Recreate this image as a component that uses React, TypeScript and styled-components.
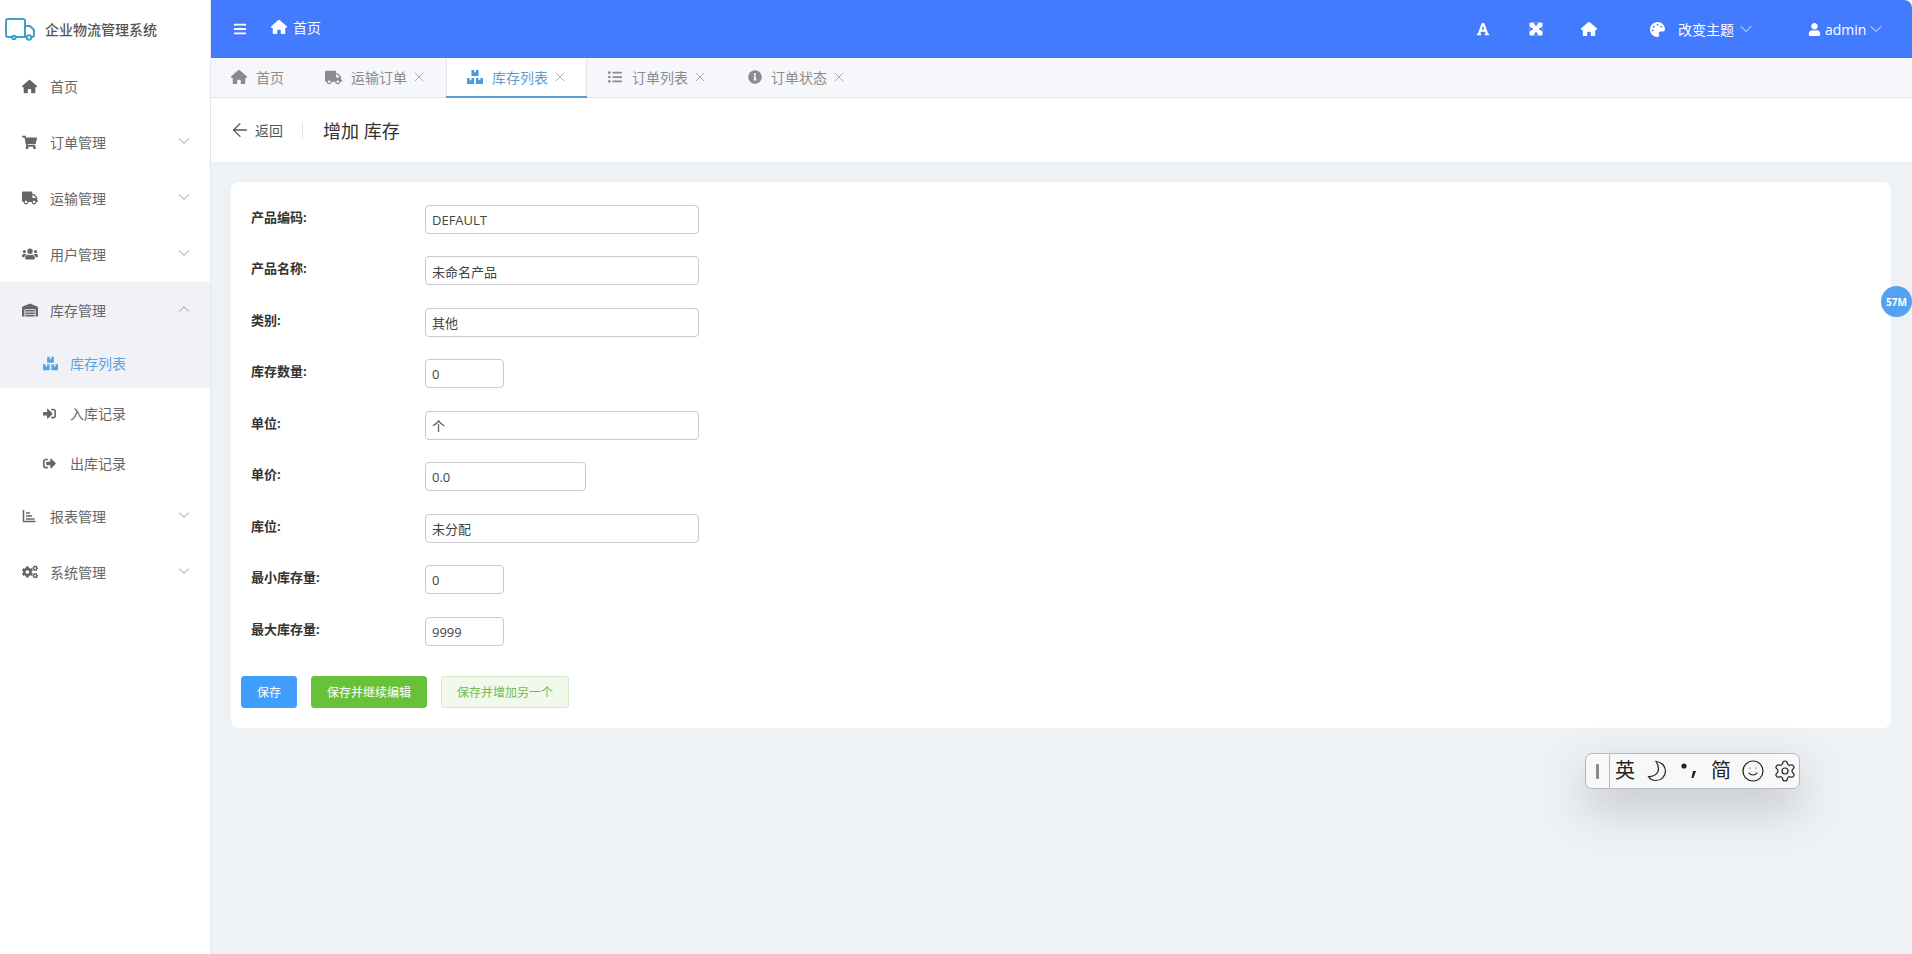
import React from "react";
import styled, { createGlobalStyle } from "styled-components";
import {
  FaBars,
  FaBoxes,
  FaCogs,
  FaFont,
  FaInfoCircle,
  FaListUl,
  FaPalette,
  FaShoppingCart,
  FaSignInAlt,
  FaSignOutAlt,
  FaTruck,
  FaUser,
  FaUsers,
  FaWarehouse,
} from "react-icons/fa";
import { FaHouse } from "react-icons/fa6";
import { ArrowLeft, ChevronDown, ChevronUp, Settings, Smile, X } from "lucide-react";

const FONT = `"Open Sans", "Noto Sans CJK SC", sans-serif`;

const GlobalStyle = createGlobalStyle`
  html, body {
    margin: 0;
    padding: 0;
    height: 100%;
    background: #fff;
    font-family: ${FONT};
    overflow: hidden;
  }
  #root { height: 100%; }
  * { box-sizing: border-box; }
`;

const Shell = styled.div`
  display: flex;
  width: 1912px;
  height: 954px;
  position: relative;
  overflow: hidden;
  border-top-right-radius: 8px;
`;

const Sidebar = styled.aside`
  width: 211px;
  flex: none;
  background: #fff;
  border-right: 1px solid #e3e6ea;
`;

const Brand = styled.div`
  height: 58px;
  display: flex;
  align-items: center;
  padding-left: 5px;
  gap: 10px;
  font-size: 14px;
  font-weight: 500;
  color: #555;
`;

const MenuRow = styled.div<{ $open?: boolean }>`
  height: 56px;
  display: flex;
  align-items: center;
  padding-left: 22px;
  font-size: 14px;
  color: #666;
  background: ${(p) => (p.$open ? "#f0f2f7" : "transparent")};
`;

const MenuIcon = styled.span`
  width: 28px;
  flex: none;
  display: flex;
  align-items: center;
  color: #666;
`;

const MenuLabel = styled.span`
  flex: 1;
`;

const MenuArrow = styled.span`
  width: 35px;
  margin-top: -3px;
  display: flex;
  color: #8f8f8f;
`;

const SubRow = styled.div<{ $active?: boolean }>`
  height: 50px;
  display: flex;
  align-items: center;
  padding-left: 43px;
  font-size: 14px;
  color: ${(p) => (p.$active ? "#5aa2e0" : "#666")};
  background: ${(p) => (p.$active ? "#f0f2f7" : "transparent")};
`;

const SubIcon = styled.span`
  width: 27px;
  flex: none;
  display: flex;
  align-items: center;
`;

const Main = styled.main`
  flex: 1;
  min-width: 0;
  display: flex;
  flex-direction: column;
  background: #eff2f5;
`;

const TopBar = styled.header`
  height: 58px;
  flex: none;
  display: flex;
  align-items: center;
  background: #437bff;
  color: #fff;
  font-size: 14px;
`;

const BarsButton = styled.span`
  margin-left: 22px;
  width: 38px;
  display: flex;
`;

const Crumb = styled.span`
  display: flex;
  align-items: center;
  gap: 6px;
  margin-top: -4px;
`;

const TopRight = styled.div`
  margin-left: auto;
  display: flex;
  align-items: center;
  height: 100%;
`;

const TopIcon = styled.span`
  width: 16px;
  display: flex;
  justify-content: center;
  margin-right: 37px;
`;

const ThemeMenu = styled.span`
  display: flex;
  align-items: center;
  margin-left: 16px;
  width: 158px;
`;

const ThemeText = styled.span`
  margin: 0 2px 0 13px;
`;

const UserMenu = styled.span`
  display: flex;
  align-items: center;
  width: 104px;
  font-size: 14px;
`;

const UserName = styled.span`
  margin-left: 4px;
`;

const TabBar = styled.nav`
  height: 40px;
  flex: none;
  display: flex;
  background: #f5f7fa;
  border-bottom: 1px solid #e2e5e9;
  font-size: 14px;
  color: #8c8c8c;
`;

const Tab = styled.div<{ $active?: boolean; $gap: number }>`
  display: flex;
  align-items: center;
  padding: 0 20px;
  gap: ${(p) => p.$gap}px;
  height: 40px;
  color: ${(p) => (p.$active ? "#5a9fd4" : "#8c8c8c")};
  background: ${(p) => (p.$active ? "#fff" : "transparent")};
  border-bottom: 2px solid ${(p) => (p.$active ? "#5a9bcb" : "transparent")};
  box-shadow: ${(p) => (p.$active ? "inset 1px 0 #e2e5e9, inset -1px 0 #e2e5e9" : "none")};
`;

const TabIcon = styled.span<{ $active?: boolean; $box: number }>`
  width: ${(p) => p.$box}px;
  display: flex;
  justify-content: center;
  color: ${(p) => (p.$active ? "#4a9ae0" : "#8a8a8f")};
`;

const TabClose = styled.span<{ $gap: number }>`
  display: flex;
  margin-left: ${(p) => 4 - p.$gap}px;
  margin-right: -1px;
  color: #999;
`;

const PageHeader = styled.div`
  height: 64px;
  flex: none;
  display: flex;
  align-items: center;
  background: #fff;
  padding-left: 18px;
`;

const BackLink = styled.span`
  display: flex;
  align-items: center;
  gap: 4px;
  font-size: 14px;
  color: #555;
`;

const HeaderDivider = styled.span`
  width: 1px;
  height: 16px;
  background: #e3e5e8;
  margin: 0 20px 0 19px;
`;

const PageTitle = styled.span`
  font-size: 18px;
  color: #303133;
`;

const Body = styled.div`
  flex: 1;
  padding: 20px 21px 0 20px;
`;

const Card = styled.form`
  background: #fff;
  border-radius: 8px;
  padding: 23px 20px 20px 10px;
  height: 546px;
`;

const FormRow = styled.div`
  display: flex;
  align-items: flex-start;
  height: 51.45px;
`;

const FieldLabel = styled.label`
  width: 184px;
  flex: none;
  padding-left: 10px;
  margin-top: 2px;
  font-size: 13px;
  line-height: 20px;
  font-weight: 700;
  color: #333;
`;

const Field = styled.input<{ $size: "long" | "mid" | "short" }>`
  height: 29px;
  width: ${(p) => ({ long: 274, mid: 161, short: 79 }[p.$size])}px;
  border: 1px solid #c9c9c9;
  border-radius: 4px;
  padding: 1px 6px 0;
  font-family: ${FONT};
  font-size: 13px;
  color: #444;
  outline: none;
  background: #fff;
`;

const Actions = styled.div`
  display: flex;
  gap: 14px;
  margin-top: 8px;
`;

const ActionButton = styled.button<{ $kind: "primary" | "success" | "plain" }>`
  height: 32px;
  padding: 0 15px;
  border-radius: 3px;
  font-family: ${FONT};
  font-size: 12px;
  cursor: pointer;
  color: ${(p) => (p.$kind === "plain" ? "#74bb50" : "#fff")};
  background: ${(p) =>
    p.$kind === "primary" ? "#409eff" : p.$kind === "success" ? "#67c23a" : "#f0f9eb"};
  border: 1px solid
    ${(p) =>
      p.$kind === "primary" ? "#409eff" : p.$kind === "success" ? "#67c23a" : "#d5ebc8"};
`;

const MemoryBadge = styled.div`
  position: absolute;
  left: 1881px;
  top: 286px;
  width: 31px;
  height: 31px;
  border-radius: 50%;
  background: #55a3f0;
  color: #fff;
  font-size: 10px;
  font-weight: 700;
  display: flex;
  align-items: center;
  justify-content: center;
`;

const ImeBar = styled.div`
  position: absolute;
  left: 1585px;
  top: 753px;
  width: 215px;
  height: 36px;
  display: flex;
  align-items: center;
  background: #f8f8f8;
  border: 1px solid #b9b9b9;
  border-radius: 7px;
  color: #222;
  box-shadow: 0 18px 45px rgba(60, 70, 80, 0.28);
`;

const ImeGrip = styled.span`
  width: 24px;
  height: 100%;
  flex: none;
  display: flex;
  align-items: center;
  justify-content: center;
  border-right: 1px solid #b9b9b9;

  &::before {
    content: "";
    width: 3px;
    height: 15px;
    background: #888;
    border-radius: 1px;
  }
`;

const ImeItem = styled.span<{ $left: number }>`
  display: flex;
  margin-left: ${(p) => p.$left}px;
  font-size: 20px;
  line-height: 1;
`;

const TruckLogo = () => (
  <svg width="30" height="24" viewBox="0 0 30 24" fill="none" stroke="#3e9fc9" strokeWidth="2">
    <path d="M7 20H3A2 2 0 0 1 1 18V4A2 2 0 0 1 3 2H18A2 2 0 0 1 20 4V20H11" />
    <path d="M20 9H25L29 13V18A2 2 0 0 1 27 20H26.500" />
    <path d="M20 20H21" />
    <circle cx="9" cy="20.500" r="1.800" />
    <circle cx="24" cy="20.500" r="2.200" />
  </svg>
);

const ChartIcon = () => (
  <svg width="14" height="14" viewBox="0 0 14 14" fill="none" stroke="#666" strokeWidth="1.500">
    <path d="M1.500 1V12.500H13.500" />
    <path d="M4 4H8M4 7H10M4 10H12.500" />
  </svg>
);

const FullscreenIcon = () => (
  <svg width="14" height="14" viewBox="0 0 14 14">
    <rect x="0.500" y="0.500" width="13" height="13" rx="1" fill="#fff" />
    <path
      d="M4.500 0.500H9.500L7 4.500ZM4.500 13.500H9.500L7 9.500ZM0.500 4.500V9.500L4.500 7ZM13.500 4.500V9.500L9.500 7Z"
      fill="#437bff"
    />
  </svg>
);

const Moon = () => (
  <svg width="20" height="22" viewBox="0 0 20 22" fill="none" stroke="#222" strokeWidth="1.200">
    <path d="M9 1.500C15 2 18.500 6.500 18.500 11C18.500 16.500 14 20.500 9 20.500C5.500 20.500 3 19 1.500 16.500C7 17 11.500 13.500 11.500 9C11.500 6 10.500 3.500 9 1.500Z" />
  </svg>
);

const Punct = () => (
  <svg width="18" height="20" viewBox="0 0 18 20" fill="#222">
    <circle cx="4" cy="5" r="2.600" />
    <path d="M13 10H16L13.500 17H11.500Z" />
  </svg>
);

const HeadCaret = () => <ChevronDown size={20} strokeWidth={1.1} />;
const Caret = () => <ChevronDown size={18} strokeWidth={1.2} />;

const menuTop = [
  { label: "首页", icon: <FaHouse size={15} /> },
  { label: "订单管理", icon: <FaShoppingCart size={15} />, arrow: true },
  { label: "运输管理", icon: <FaTruck size={16} />, arrow: true },
  { label: "用户管理", icon: <FaUsers size={16} />, arrow: true },
];

const menuBottom = [
  { label: "报表管理", icon: <ChartIcon /> },
  { label: "系统管理", icon: <FaCogs size={16} /> },
];

const tabs = [
  { label: "首页", icon: <FaHouse size={16} />, box: 16, gap: 9, closable: false },
  { label: "运输订单", icon: <FaTruck size={17} />, box: 18, gap: 9, closable: true },
  { label: "库存列表", icon: <FaBoxes size={16} />, box: 17, gap: 9, closable: true, active: true },
  { label: "订单列表", icon: <FaListUl size={14} />, box: 16, gap: 9, closable: true },
  { label: "订单状态", icon: <FaInfoCircle size={14} />, box: 16, gap: 8, closable: true },
];

const fields: { label: string; value: string; size: "long" | "mid" | "short" }[] = [
  { label: "产品编码:", value: "DEFAULT", size: "long" },
  { label: "产品名称:", value: "未命名产品", size: "long" },
  { label: "类别:", value: "其他", size: "long" },
  { label: "库存数量:", value: "0", size: "short" },
  { label: "单位:", value: "个", size: "long" },
  { label: "单价:", value: "0.0", size: "mid" },
  { label: "库位:", value: "未分配", size: "long" },
  { label: "最小库存量:", value: "0", size: "short" },
  { label: "最大库存量:", value: "9999", size: "short" },
];

export default function App() {
  return (
    <>
      <GlobalStyle />
      <Shell>
        <Sidebar>
          <Brand>
            <TruckLogo />
            企业物流管理系统
          </Brand>
          {menuTop.map((m) => (
            <MenuRow key={m.label}>
              <MenuIcon>{m.icon}</MenuIcon>
              <MenuLabel>{m.label}</MenuLabel>
              {m.arrow && (
                <MenuArrow>
                  <Caret />
                </MenuArrow>
              )}
            </MenuRow>
          ))}
          <MenuRow $open>
            <MenuIcon>
              <FaWarehouse size={16} />
            </MenuIcon>
            <MenuLabel>库存管理</MenuLabel>
            <MenuArrow>
              <ChevronUp size={18} strokeWidth={1.2} />
            </MenuArrow>
          </MenuRow>
          <SubRow $active>
            <SubIcon>
              <FaBoxes size={15} />
            </SubIcon>
            库存列表
          </SubRow>
          <SubRow>
            <SubIcon>
              <FaSignInAlt size={13} />
            </SubIcon>
            入库记录
          </SubRow>
          <SubRow>
            <SubIcon>
              <FaSignOutAlt size={13} />
            </SubIcon>
            出库记录
          </SubRow>
          {menuBottom.map((m) => (
            <MenuRow key={m.label}>
              <MenuIcon>{m.icon}</MenuIcon>
              <MenuLabel>{m.label}</MenuLabel>
              <MenuArrow>
                <Caret />
              </MenuArrow>
            </MenuRow>
          ))}
        </Sidebar>
        <Main>
          <TopBar>
            <BarsButton>
              <FaBars size={14} />
            </BarsButton>
            <Crumb>
              <FaHouse size={16} />
              首页
            </Crumb>
            <TopRight>
              <TopIcon>
                <FaFont size={14} />
              </TopIcon>
              <TopIcon>
                <FullscreenIcon />
              </TopIcon>
              <TopIcon>
                <FaHouse size={16} />
              </TopIcon>
              <ThemeMenu>
                <FaPalette size={15} />
                <ThemeText>改变主题</ThemeText>
                <HeadCaret />
              </ThemeMenu>
              <UserMenu>
                <FaUser size={13} />
                <UserName>admin</UserName>
                <HeadCaret />
              </UserMenu>
            </TopRight>
          </TopBar>
          <TabBar>
            {tabs.map((t) => (
              <Tab key={t.label} $active={t.active} $gap={t.gap}>
                <TabIcon $active={t.active} $box={t.box}>
                  {t.icon}
                </TabIcon>
                {t.label}
                {t.closable && (
                  <TabClose $gap={t.gap}>
                    <X size={16} strokeWidth={1.2} />
                  </TabClose>
                )}
              </Tab>
            ))}
          </TabBar>
          <PageHeader>
            <BackLink>
              <ArrowLeft size={22} strokeWidth={1.4} />
              返回
            </BackLink>
            <HeaderDivider />
            <PageTitle>增加 库存</PageTitle>
          </PageHeader>
          <Body>
            <Card>
              {fields.map((f) => (
                <FormRow key={f.label}>
                  <FieldLabel>{f.label}</FieldLabel>
                  <Field $size={f.size} value={f.value} readOnly />
                </FormRow>
              ))}
              <Actions>
                <ActionButton type="button" $kind="primary">
                  保存
                </ActionButton>
                <ActionButton type="button" $kind="success">
                  保存并继续编辑
                </ActionButton>
                <ActionButton type="button" $kind="plain">
                  保存并增加另一个
                </ActionButton>
              </Actions>
            </Card>
          </Body>
        </Main>
        <MemoryBadge>57M</MemoryBadge>
        <ImeBar>
          <ImeGrip />
          <ImeItem $left={5}>英</ImeItem>
          <ImeItem $left={12}>
            <Moon />
          </ImeItem>
          <ImeItem $left={13}>
            <Punct />
          </ImeItem>
          <ImeItem $left={13}>简</ImeItem>
          <ImeItem $left={10}>
            <Smile size={24} strokeWidth={1.2} />
          </ImeItem>
          <ImeItem $left={8}>
            <Settings size={24} strokeWidth={1.2} />
          </ImeItem>
        </ImeBar>
      </Shell>
    </>
  );
}
